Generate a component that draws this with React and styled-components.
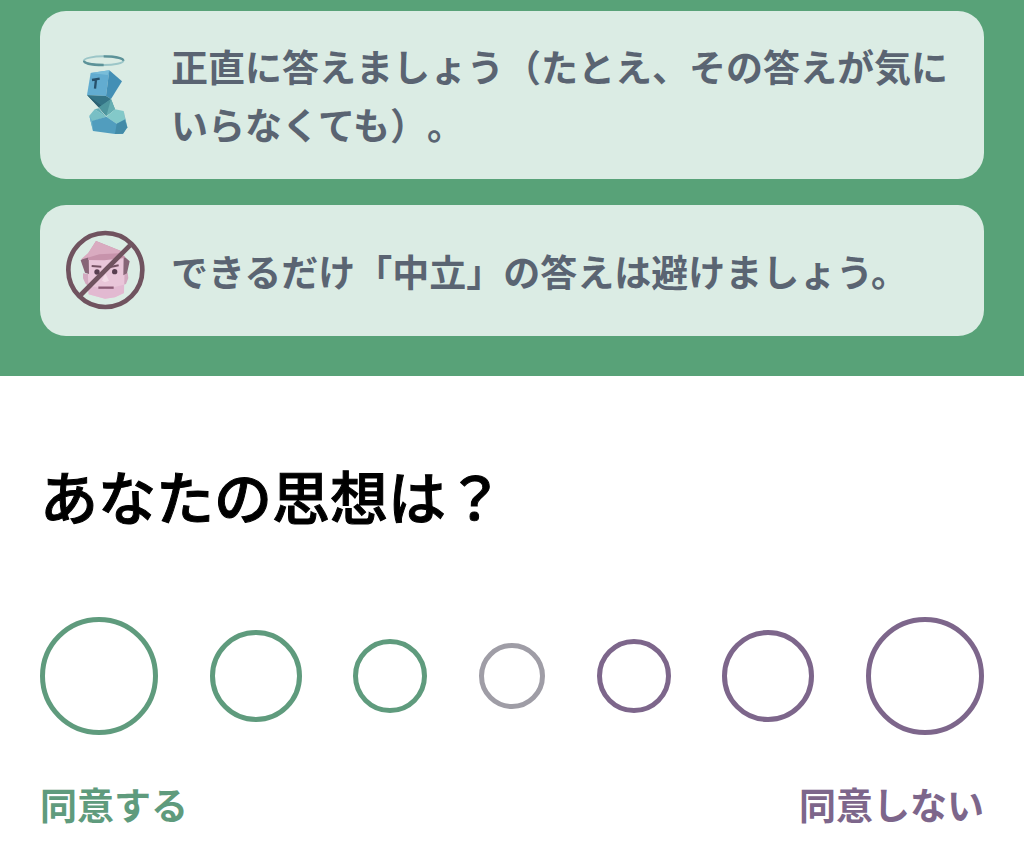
import React, { useState } from 'react'
import styled, { createGlobalStyle, css, ThemeProvider } from 'styled-components'

const theme = {
  palette: {
    green: '#58a278',
    mint: '#dbece4',
    slate: '#5a6472',
    agree: '#5f9b7d',
    neutral: '#9f9da6',
    disagree: '#7d668b',
  },
}

const GlobalStyle = createGlobalStyle`
  * {
    box-sizing: border-box;
  }

  body {
    margin: 0;
    background-color: #fff;
    font-family: "Noto Sans CJK JP", "Noto Sans", sans-serif;
    text-spacing-trim: space-all;
  }
`

const Intro = styled.header`
  padding: 11px 40px 40px;
  background-color: ${({ theme }) => theme.palette.green};
`

const Tips = styled.ul`
  margin: 0;
  padding: 0;
  list-style: none;
  display: flex;
  flex-direction: column;
  gap: 26px;
`

const Tip = styled.li`
  display: flex;
  align-items: center;
  gap: 26px;
  padding: 26px;
  border-radius: 26px;
  background-color: ${({ theme }) => theme.palette.mint};
`

const TipIcon = styled.svg`
  flex: none;
  width: 79px;
  height: 79px;
  overflow: visible;
`

const TipText = styled.p`
  margin: 0;
  color: ${({ theme }) => theme.palette.slate};
  font-size: 37px;
  font-weight: 700;
  line-height: 58px;
`

const Question = styled.main`
  padding: 83px 40px 13px;
`

const Title = styled.h1`
  margin: 0 0 86px;
  color: #000;
  font-size: 58px;
  font-weight: 500;
  line-height: 72px;
  -webkit-text-stroke: 1px #000;
`

const Scale = styled.div`
  display: flex;
  justify-content: space-between;
  align-items: center;
  margin-bottom: 40px;
`

const Choice = styled.input`
  appearance: none;
  flex: none;
  margin: 0;
  border: 5px solid;
  border-radius: 50%;
  cursor: pointer;
  ${({ theme, $size, $tone }) => css`
    width: ${$size}px;
    height: ${$size}px;
    border-color: ${theme.palette[$tone]};

    &:checked {
      background-color: ${theme.palette[$tone]};
    }
  `}
`

const Ends = styled.div`
  display: flex;
  justify-content: space-between;
`

const EndLabel = styled.label`
  color: ${({ theme, $tone }) => theme.palette[$tone]};
  font-size: 37px;
  font-weight: 700;
  line-height: 58px;
`

const HonestIcon = () => (
  <TipIcon viewBox="18 46 237 237" aria-hidden="true">
    <ellipse cx="131" cy="60" rx="59" ry="13" fill="none" stroke="#9cc6c8" strokeWidth="6" />
    <path d="M72 60c0 8 26 13 59 13M131 47c33 0 59 5 59 13" fill="none" stroke="#5c9298" strokeWidth="7" />
    <path d="M92 97l56-8-10 77-57-3z" fill="#62acd0" />
    <path d="M148 89l38 33-33 53-15-9z" fill="#438fb5" />
    <path d="M92 97l56-8-5 14z" fill="#79bdd9" />
    <path d="M81 163l57 3 15 9-26 22-11 3z" fill="#347486" />
    <path d="M81 163l35 37 23 26-12-29z" fill="#2c6172" />
    <path d="M116 200l37-25 12 31-26 20z" fill="#4e969e" />
    <path d="M153 175l-14 51 26-20z" fill="#66aeb2" />
    <path d="M88 225l16-19 35 22-43 15z" fill="#78bfc5" />
    <path d="M104 206l12-3 23 25z" fill="#64afb7" />
    <path d="M139 228l26-22 26 5 4 27-25 11z" fill="#83c9c9" />
    <path d="M88 225l8 16 43-13 31 21 25-13 7 24-13 19-24 1-66-9z" fill="#519dbe" />
    <path d="M88 225l8 16 3 30z" fill="#6db5cb" />
    <path d="M170 249l25-12 7 23-13 19-24 1z" fill="#438ba8" />
    <path d="M191 211l11 49-7-22z" fill="#5ba5b4" />
    <path d="M96 118l23-4M108 116l-3 28" fill="none" stroke="#27516b" strokeWidth="7" />
  </TipIcon>
)

const NoNeutralIcon = () => (
  <TipIcon viewBox="33 33 237 237" aria-hidden="true">
    <path d="M84 160l16 2 2 36-10-6-8-17zM207 160l11-2 2 16-7 18-9 3z" fill="#d3aac0" />
    <path d="M98 107h112l-3 112-27 13-30 4-49-13z" fill="#e9c6d9" />
    <path d="M98 196l52 12 57-14v25l-27 13-30 4-49-13z" fill="#e2b9d1" />
    <path d="M77 121l24-19 1 60-12-4zM206 108l18 16-8 36-11 6z" fill="#876577" />
    <path d="M123 63l73 29 14 22-62 7-49-1 2-22z" fill="#c793ab" />
    <path d="M123 63l-23 35-23 21 56-16 73-4-10-7z" fill="#d9abc0" />
    <path d="M110 138l29 2M166 141l25-5" stroke="#755263" strokeWidth="6" />
    <circle cx="126" cy="156" r="8" fill="#593f50" />
    <circle cx="179" cy="155" r="8" fill="#593f50" />
    <path d="M151 160l-10 22 9 5 12-5z" fill="#f3dae6" />
    <path d="M130 203h46" stroke="#8c5c76" strokeWidth="7" />
    <circle cx="151" cy="150" r="111" fill="none" stroke="#70535f" strokeWidth="14" />
    <path d="M74 228L225 76" stroke="#70535f" strokeWidth="14" />
  </TipIcon>
)

const tips = [
  { Icon: HonestIcon, text: '正直に答えましょう（たとえ、その答えが気にいらなくても）。' },
  { Icon: NoNeutralIcon, text: 'できるだけ「中立」の答えは避けましょう。' },
]

const choices = [
  { id: 'agree-3', size: 118, tone: 'agree' },
  { id: 'agree-2', size: 92, tone: 'agree', name: 'やや強く同意する' },
  { id: 'agree-1', size: 74, tone: 'agree', name: 'やや同意する' },
  { id: 'neutral', size: 66, tone: 'neutral', name: '中立' },
  { id: 'disagree-1', size: 74, tone: 'disagree', name: 'やや同意しない' },
  { id: 'disagree-2', size: 92, tone: 'disagree', name: 'あまり同意しない' },
  { id: 'disagree-3', size: 118, tone: 'disagree' },
]

const App = () => {
  const [answer, setAnswer] = useState(null)

  return (
    <ThemeProvider theme={theme}>
      <GlobalStyle />
      <Intro>
        <Tips>
          {tips.map(({ Icon, text }) => (
            <Tip key={text}>
              <Icon />
              <TipText>{text}</TipText>
            </Tip>
          ))}
        </Tips>
      </Intro>
      <Question>
        <Title id="question">あなたの思想は？</Title>
        <Scale role="radiogroup" aria-labelledby="question">
          {choices.map(({ id, size, tone, name }) => (
            <Choice
              key={id}
              id={id}
              type="radio"
              name="answer"
              value={id}
              aria-label={name}
              checked={answer === id}
              onChange={() => setAnswer(id)}
              $size={size}
              $tone={tone}
            />
          ))}
        </Scale>
        <Ends>
          <EndLabel htmlFor="agree-3" $tone="agree">同意する</EndLabel>
          <EndLabel htmlFor="disagree-3" $tone="disagree">同意しない</EndLabel>
        </Ends>
      </Question>
    </ThemeProvider>
  )
}

export default App
